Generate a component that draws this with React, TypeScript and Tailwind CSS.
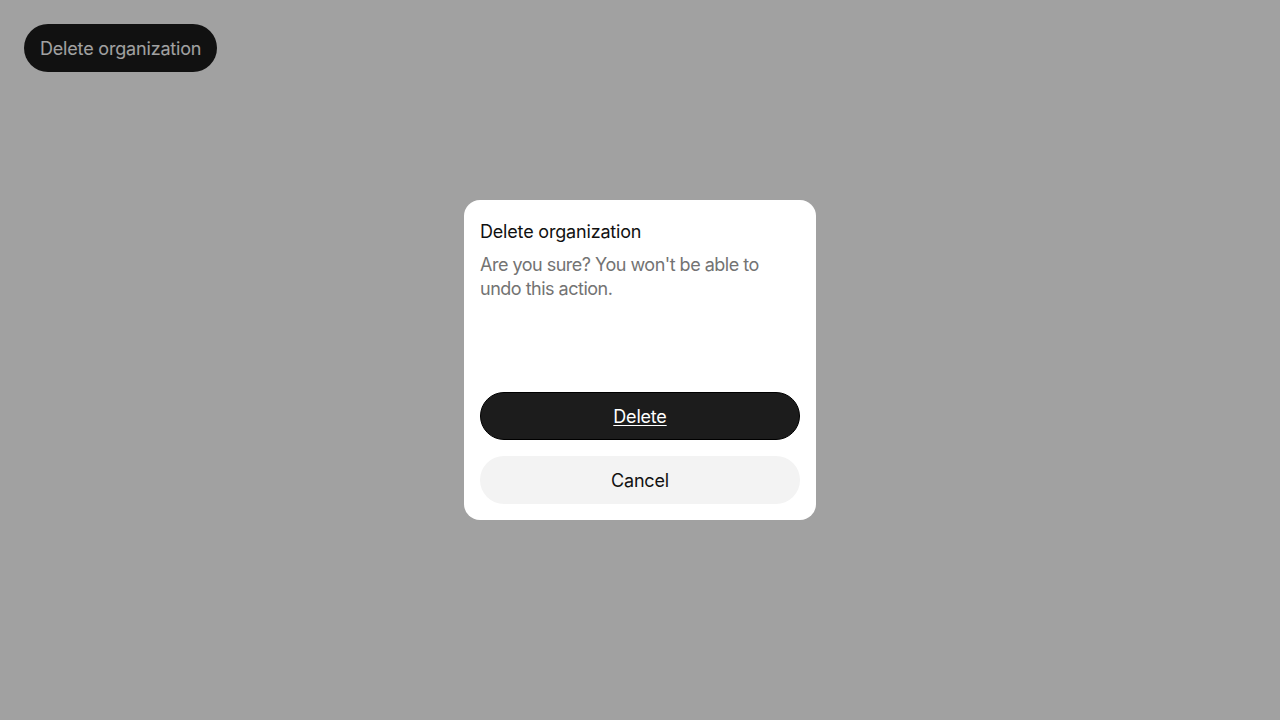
import React from "react";

const font = { fontFamily: "Inter, 'Noto Sans', sans-serif" };

export default function App() {
  return (
    <div className="relative h-[720px] w-[1280px] bg-white" style={font}>
      <div className="p-6">
        <button className="h-12 rounded-full bg-[#1c1c1c] px-4 text-[18px] tracking-[-0.18px] text-white">
          Delete organization
        </button>
      </div>

      {/* overlay + dialog */}
      <div className="fixed inset-0 flex items-center justify-center bg-black/[0.37]">
        <div className="flex h-[320px] w-[352px] flex-col rounded-2xl bg-white p-4">
          <h2 className="text-[18px] leading-8 tracking-[-0.18px] text-[#111111]">
            Delete organization
          </h2>
          <p className="mt-[5px] text-[18px] leading-6 tracking-[-0.5px] text-[#737373]">
            Are you sure? You won't be able to undo this action.
          </p>
          <div className="mt-auto flex flex-col gap-4">
            <button className="h-12 w-full rounded-full border border-black bg-[#1c1c1c] text-[18px] tracking-[-0.2px] text-white underline underline-offset-2">
              Delete
            </button>
            <button className="h-12 w-full rounded-full bg-[#f3f3f3] text-[18px] tracking-[-0.2px] text-[#111111]">
              Cancel
            </button>
          </div>
        </div>
      </div>
    </div>
  );
}
